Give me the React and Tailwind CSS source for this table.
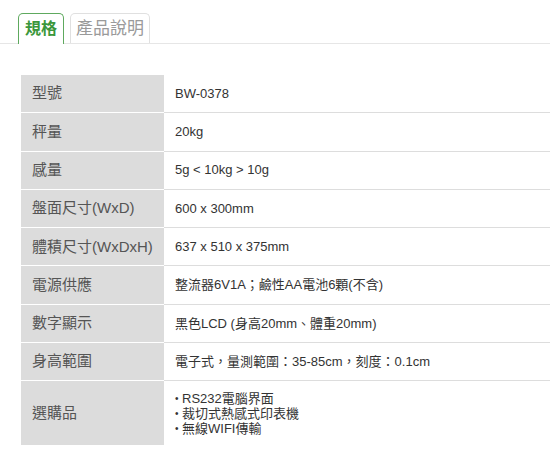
import React from "react";

const rows = [
  ["型號", "BW-0378"],
  ["秤量", "20kg"],
  ["感量", "5g < 10kg > 10g"],
  ["盤面尺寸(WxD)", "600 x 300mm"],
  ["體積尺寸(WxDxH)", "637 x 510 x 375mm"],
  ["電源供應", "整流器6V1A；鹼性AA電池6顆(不含)"],
  ["數字顯示", "黑色LCD (身高20mm、體重20mm)"],
  ["身高範圍", "電子式，量測範圍：35-85cm，刻度：0.1cm"],
];

const options = ["RS232電腦界面", "裁切式熱感式印表機", "無線WIFI傳輸"];

const font = "font-['Liberation_Sans','Noto_Sans_CJK_TC',sans-serif]";

function Row({ label, first, tall, children }) {
  const h = first ? "h-[37.3px]" : tall ? "h-[65px]" : "h-[38.3px]";
  const bt = first ? "" : "border-t";
  return (
    <div className={`flex ${h}`}>
      <div className={`w-[143px] shrink-0 bg-[#dcdcdc] ${bt} border-white flex items-center pl-[11px] text-[15px] text-[#555]`}>
        {label}
      </div>
      <div className={`flex-1 ${bt} border-[#dddddd] flex items-center pl-[11px] text-[13px] text-[#333]`}>
        {children}
      </div>
    </div>
  );
}

export default function App() {
  return (
    <div className={`w-[550px] h-[459px] bg-white overflow-hidden ${font}`}>
      {/* tabs */}
      <div className="flex items-end gap-[6px] pl-[18px] pt-[13px] border-b border-[#e6e6e6]">
        <div className="relative -mb-px h-[31px] px-[6px] bg-white border border-b-0 border-[#5ea95e] rounded-t-[5px] flex items-center text-[16px] font-bold text-[#3b973b]">
          規格
        </div>
        <div className="h-[30px] px-[5px] border border-b-0 border-[#e0e0e0] rounded-t-[5px] flex items-center text-[17px] text-[#9a9a9a]">
          產品說明
        </div>
      </div>

      {/* spec table */}
      <div className="ml-[21px] mt-[31px]">
        {rows.map(([label, value], i) => (
          <Row key={label} label={label} first={i === 0}>
            {value}
          </Row>
        ))}
        <Row label="選購品" tall>
          <ul className="leading-[15px]">
            {options.map((o) => (
              <li key={o} className="flex">
                <span className="w-[7px] text-[10px]">•</span>
                {o}
              </li>
            ))}
          </ul>
        </Row>
      </div>
    </div>
  );
}
